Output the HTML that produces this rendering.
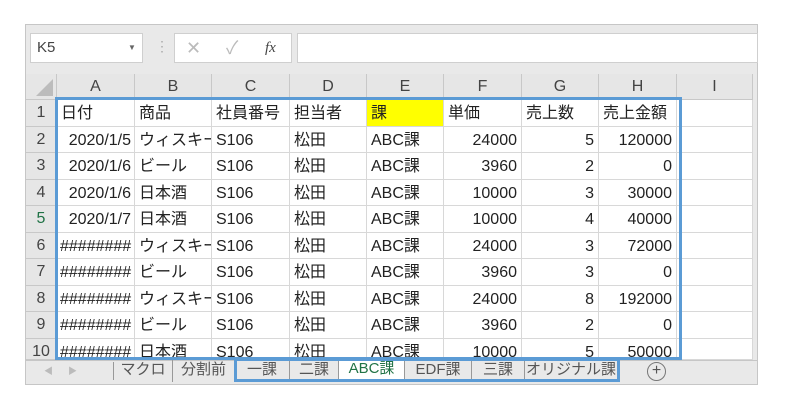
<!DOCTYPE html><html><head><meta charset="utf-8"><style>
*{margin:0;padding:0;box-sizing:border-box}
body{width:785px;height:401px;background:#fff;position:relative;overflow:hidden;font-family:"Liberation Sans","Noto Sans CJK JP",sans-serif;font-size:16px;color:#222}
.a{position:absolute}
.c{position:absolute;height:27px;line-height:27px;padding:0 4px;white-space:nowrap;overflow:hidden;border-right:1px solid #d8d8d8;border-bottom:1px solid #d8d8d8}
.h{position:absolute;background:#e6e6e6;color:#444;text-align:center;border-right:1px solid #c8c8c8;border-bottom:1px solid #c8c8c8;font-size:16px}
.t{position:absolute;top:360px;height:22px;line-height:20px;font-size:15px;color:#555;text-align:center;border-right:1px solid #999}
</style></head><body>
<div class="a" style="left:25px;top:24px;width:733px;height:361px;background:#e9e9e9;border:1px solid #c6c6c6"></div>
<div class="a" style="left:30px;top:33px;width:113px;height:30px;background:#fff;border:1px solid #cfcfcf;line-height:28px;padding-left:6px;font-size:15px;color:#444">K5<span style="position:absolute;left:97px;top:0;font-size:8px;color:#666">▼</span></div>
<div class="a" style="left:155px;top:38px;color:#aaa;font-size:14px">⋮</div>
<div class="a" style="left:174px;top:33px;width:118px;height:30px;background:#fff;border:1px solid #cfcfcf;color:#bbb;font-size:18px;line-height:28px"><span style="position:absolute;left:11px">✕</span><span style="position:absolute;left:51px">✓</span><span style="position:absolute;left:90px;color:#444;font-family:'Liberation Serif',serif;font-style:italic;font-size:15px">fx</span></div>
<div class="a" style="left:297px;top:33px;width:461px;height:30px;background:#fff;border:1px solid #cfcfcf"></div>
<div class="a" style="left:26px;top:74px;width:727px;height:286px;background:#fff"></div>
<div id="g"></div>
<div class="a" style="left:26px;top:360px;width:731px;height:24px;background:#e9e9e9;border-top:1px solid #c6c6c6"></div>
<div class="a" style="left:44px;top:364px;color:#bbb;font-size:9px">◀&nbsp;&nbsp;&nbsp;&nbsp;&nbsp;&nbsp;▶</div>
<div class="a" style="left:113px;top:362px;width:1px;height:18px;background:#999"></div>
<div class="t" style="left:114px;width:59px">マクロ</div>
<div class="t" style="left:173px;width:62px">分割前</div>
<div class="t" style="left:235px;width:55px">一課</div>
<div class="t" style="left:290px;width:49px">二課</div>
<div class="t" style="left:339px;width:66px;background:#fff;color:#217346;top:359px;height:23px">ABC課</div>
<div class="t" style="left:405px;width:67px">EDF課</div>
<div class="t" style="left:472px;width:53px">三課</div>
<div class="t" style="left:525px;width:92px;border-right:none">オリジナル課</div>
<div class="a" style="left:647px;top:362px;width:19px;height:19px;border:1px solid #777;border-radius:50%;text-align:center;line-height:16px;color:#555;font-size:16px">+</div>
<div class="a" style="left:55px;top:97px;width:627px;height:263px;border:3px solid #5b9bd5"></div>
<div class="a" style="left:234px;top:358px;width:386px;height:24px;border:3px solid #5b9bd5"></div>
<script>
var xs=[26,57,135,212,290,367,444,522,599,677,753],cols="ABCDEFGHI";
var H='';
H+='<div class="h" style="left:26px;top:74px;width:31px;height:26px"><div style="position:absolute;right:3px;bottom:3px;width:0;height:0;border-left:17px solid transparent;border-bottom:17px solid #bcbcbc"></div></div>';
for(var i=0;i<9;i++)H+='<div class="h" style="left:'+xs[i+1]+'px;top:74px;width:'+(xs[i+2]-xs[i+1])+'px;height:26px;line-height:26px">'+cols[i]+'</div>';
var d=[["日付","商品","社員番号","担当者","課","単価","売上数","売上金額"],
["2020/1/5","ウィスキー","S106","松田","ABC課","24000","5","120000"],
["2020/1/6","ビール","S106","松田","ABC課","3960","2","0"],
["2020/1/6","日本酒","S106","松田","ABC課","10000","3","30000"],
["2020/1/7","日本酒","S106","松田","ABC課","10000","4","40000"],
["########","ウィスキー","S106","松田","ABC課","24000","3","72000"],
["########","ビール","S106","松田","ABC課","3960","3","0"],
["########","ウィスキー","S106","松田","ABC課","24000","8","192000"],
["########","ビール","S106","松田","ABC課","3960","2","0"],
["########","日本酒","S106","松田","ABC課","10000","5","50000"]];
for(var r=0;r<10;r++){var y=100+r*26.5,h=r==9?21:26.5;
H+='<div class="h" style="left:26px;top:'+y+'px;width:31px;height:'+h+'px;line-height:26px;'+(r==4?'color:#217346':'')+'">'+(r+1)+'</div>';
for(var c=0;c<9;c++){var v=c<8?d[r][c]:'',num=r>0&&c>=5,st='left:'+xs[c+1]+'px;top:'+y+'px;width:'+(xs[c+2]-xs[c+1])+'px;height:'+h+'px;';
if(num)st+='text-align:right;';if(r>0&&c==0)st+='text-align:right;padding:0 3px;';
if(r==0&&c==4)st+='background:#ffff00;';
H+='<div class="c" style="'+st+'">'+v+'</div>';}}
document.getElementById('g').innerHTML=H;
</script>
</body></html>
